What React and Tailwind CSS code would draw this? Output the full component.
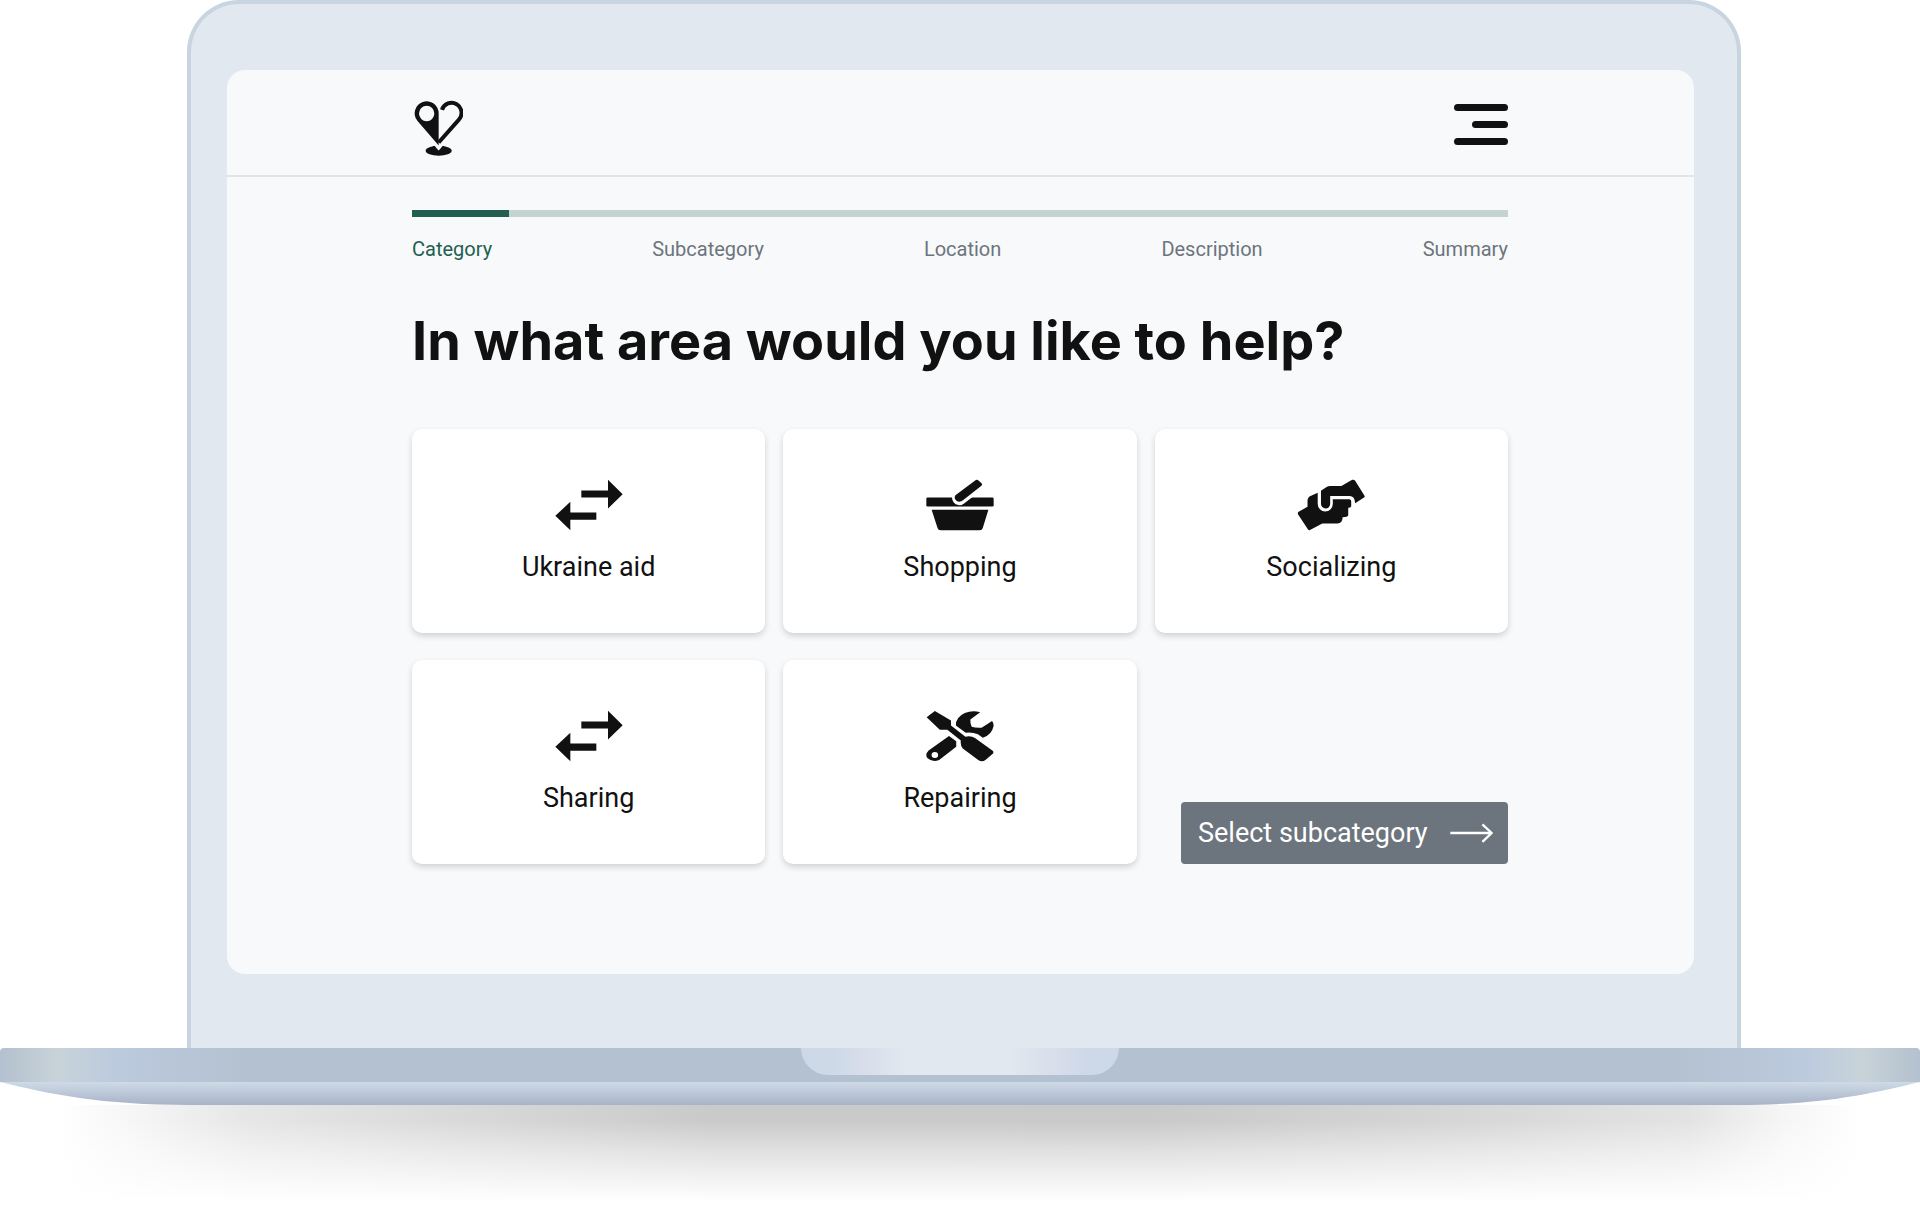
import React, { useState } from 'react'
import clsx from 'clsx'

const STEPS = ['Category', 'Subcategory', 'Location', 'Description', 'Summary']

const CATEGORIES = [
  { id: 'ukraine', label: 'Ukraine aid', Icon: SwapIcon },
  { id: 'shopping', label: 'Shopping', Icon: BasketIcon },
  { id: 'socializing', label: 'Socializing', Icon: HandsIcon },
  { id: 'sharing', label: 'Sharing', Icon: SwapIcon },
  { id: 'repairing', label: 'Repairing', Icon: ToolsIcon },
]

function Logo() {
  return (
    <svg viewBox="731 300 150 170" className="h-[57px] w-[50px]" fill="#111" aria-hidden="true">
      <ellipse cx="808" cy="452" rx="39" ry="15" />
      <path d="M789 428L797 438L803 446L808 451L813 446L819 438L827 428Z" fill="#f8f9fb" />
      <path
        fillRule="evenodd"
        d="M808 436L744 362A36 36 0 1 1 808 340ZM772 317A23 23 0 1 0 772 363A23 23 0 1 0 772 317Z"
      />
      <path d="M818 329A30 30 0 1 1 868 359L808 427" fill="none" stroke="#111" strokeWidth="12" />
    </svg>
  )
}

function SwapIcon() {
  return (
    <svg viewBox="74 57 204 153" className="h-[52px] w-[68px]" fill="#111" aria-hidden="true">
      <path d="M153 90H233V58L277 101L233 144V111H153Z" />
      <path d="M198 156H120V124L75 166L120 209V178H198Z" />
    </svg>
  )
}

function BasketIcon() {
  return (
    <svg viewBox="77 55 206 157" className="h-[52px] w-[68px]" fill="#111" aria-hidden="true">
      <rect x="78" y="111" width="204" height="27" rx="4" />
      <path d="M178 112L246 60" stroke="#fff" strokeWidth="44" strokeLinecap="round" />
      <path d="M166 104L228 58Q232 56 236 59L246 68Q249 71 245 75L189 119Q181 126 171 122Q160 114 166 104Z" />
      <path d="M94 148H266L249 203Q247 210 240 210H121Q114 210 112 203Z" />
    </svg>
  )
}

function HandsIcon() {
  return (
    <svg viewBox="80 55 207 157" className="h-[52px] w-[68px]" fill="#111" aria-hidden="true">
      <path d="M83 162Q81 157 85 154L112 139V118Q113 112 118 108L143 96V130A23 23 0 0 0 189 130V116H240Q245 117 245 122V137Q244 142 236 142V165Q235 171 219 171Q218 190 203 190H157L121 209Q116 212 113 207Z" />
      <path d="M153 90L170 79Q175 76 181 76H215L248 57Q254 56 257 60L286 106Q287 109 284 111L257 128Q256 106 240 106H181V131Q179 144 166 144Q153 142 153 130Z" />
    </svg>
  )
}

function ToolsIcon() {
  return (
    <svg viewBox="78 58 207 156" className="h-[52px] w-[68px]" fill="#111" aria-hidden="true">
      <path d="M80 79L105 60L154 89V104L198 138Q216 135 227 142L281 181Q285 185 282 189L259 209Q249 216 238 210L190 174Q182 166 184 150L143 117H120Z" />
      <path d="M243 64Q220 57 196 66Q168 79 169 104L199 126Q220 124 236 131L251 141Q278 134 284 105Q284 95 279 90L264 100L247 111Q228 112 217 108Q212 98 213 86Z" />
      <path
        fillRule="evenodd"
        d="M148 136L86 180Q74 192 82 203Q97 217 118 209L170 169V152ZM105 185A10 9 0 1 0 105 203A10 9 0 1 0 105 185Z"
      />
    </svg>
  )
}

function ArrowIcon() {
  return (
    <svg viewBox="960 187 130 60" className="h-5 w-[43px]" fill="none" stroke="#fff" strokeWidth="7" aria-hidden="true">
      <path d="M961 217H1086M1058 191L1086 217L1058 244" />
    </svg>
  )
}

function Header() {
  return (
    <header className="flex items-start justify-between border-b-2 border-[#e2e5e8] px-[186px] pt-[30px] pb-[18px]">
      <a href="#home" aria-label="Home"><Logo /></a>
      <button type="button" aria-label="Open menu" className="mt-1 flex flex-col items-end gap-[10px]">
        <span className="h-[7px] w-[54px] rounded-full bg-[#111]" />
        <span className="h-[7px] w-9 rounded-full bg-[#111]" />
        <span className="h-[7px] w-[54px] rounded-full bg-[#111]" />
      </button>
    </header>
  )
}

function Progress({ step }) {
  return (
    <div>
      <div role="progressbar" aria-label="Progress" aria-valuenow={step + 1} aria-valuemax={STEPS.length} className="h-[7px] bg-[#c5d4d0]">
        <div className="h-full w-[97px] bg-[#225f50]" />
      </div>
      <ol className="mt-5 flex justify-between text-xl leading-6">
        {STEPS.map((s, i) => (
          <li key={s} className={i === step ? 'text-[#225f50]' : 'text-[#6c757d]'}>{s}</li>
        ))}
      </ol>
    </div>
  )
}

function CategoryCard({ label, Icon, selected, onClick }) {
  return (
    <button
      type="button"
      aria-pressed={selected}
      onClick={onClick}
      className={clsx(
        'flex h-[204px] flex-col items-center rounded-[10px] bg-white pt-[50px] shadow-[0_3px_6px_rgba(0,0,0,0.16)]',
        selected && 'ring-2 ring-[#225f50]'
      )}
    >
      <Icon />
      <span className="mt-5 text-[27px] leading-8">{label}</span>
    </button>
  )
}

function LaptopBase() {
  return (
    <div>
      <div className="flex h-[34px] justify-center rounded-t bg-[linear-gradient(90deg,#b4c1d0_0%,#bac6d1_1%,#c8d3d9_3%,#bccade_6%,#b9c6d8_9%,#b4c1d0_13%,#b4c1d0_87%,#b9c6d8_91%,#bccade_94%,#c8d3d9_97%,#bac6d1_99%,#b4c1d0_100%)]">
        <div className="h-[27px] w-[318px] rounded-b-[28px] bg-[linear-gradient(90deg,#cdd9e7_0%,#cdd9e7_10%,#d8deea_20%,#e1e8f0_33%,#e1e8f0_66%,#d8deea_80%,#cdd8e8_90%,#cdd8e8_100%)]" />
      </div>
      <svg viewBox="0 0 1920 23" preserveAspectRatio="none" className="block h-[23px] w-full" aria-hidden="true">
        <defs>
          <linearGradient id="under" x1="0" y1="0" x2="0" y2="1">
            <stop offset="0" stopColor="#cfdae8" />
            <stop offset="1" stopColor="#a7b4c7" />
          </linearGradient>
        </defs>
        <path d="M0 0H1920C1870 12 1820 23 1738 23H190C100 23 50 12 0 0Z" fill="url(#under)" />
      </svg>
      <div className="h-[105px] bg-[linear-gradient(180deg,#fff0_0%,#fff0_15%,#ffffff73_45%,#ffffffb3_65%,#fff_92%),linear-gradient(90deg,#fff_3%,#f6f6f6_7%,#e6e6e6_13%,#d9d9d9_24%,#cacaca_37%,#c9c9c9_60%,#d6d6d6_76%,#e3e3e3_88%,#f6f6f6_93%,#fff_97%)]" />
    </div>
  )
}

export default function App() {
  const [selected, setSelected] = useState(null)

  return (
    <div className="overflow-hidden bg-white text-[#111] [font-family:Roboto,sans-serif]">
      <div className="pr-[179px] pl-[187px]">
        <div className="rounded-t-[52px] border-4 border-b-0 border-[#c9d4e1] bg-[#e1e8f0] pt-[66px] pr-[43px] pb-[74px] pl-9">
          <div className="overflow-hidden rounded-[18px] bg-[#f8f9fb]">
            <Header />
            <main className="pr-[186px] pb-[110px] pl-[185px] pt-[33px]">
              <Progress step={0} />
              <h1 className="mt-[46px] text-[54px] leading-[68px] font-bold [font-family:Inter,sans-serif]">
                In what area would you like to help?
              </h1>
              <div className="mt-[54px] grid grid-cols-3 gap-x-[18px] gap-y-[27px]">
                {CATEGORIES.map((c) => (
                  <CategoryCard
                    key={c.id}
                    label={c.label}
                    Icon={c.Icon}
                    selected={selected === c.id}
                    onClick={() => setSelected(c.id)}
                  />
                ))}
                <button type="button" className="flex h-[62px] w-[327px] items-center justify-between self-end justify-self-end rounded bg-[#6c757d] pr-[15px] pl-[17px] text-[27px] leading-8 text-white">
                  Select subcategory
                  <ArrowIcon />
                </button>
              </div>
            </main>
          </div>
        </div>
      </div>
      <LaptopBase />
    </div>
  )
}
